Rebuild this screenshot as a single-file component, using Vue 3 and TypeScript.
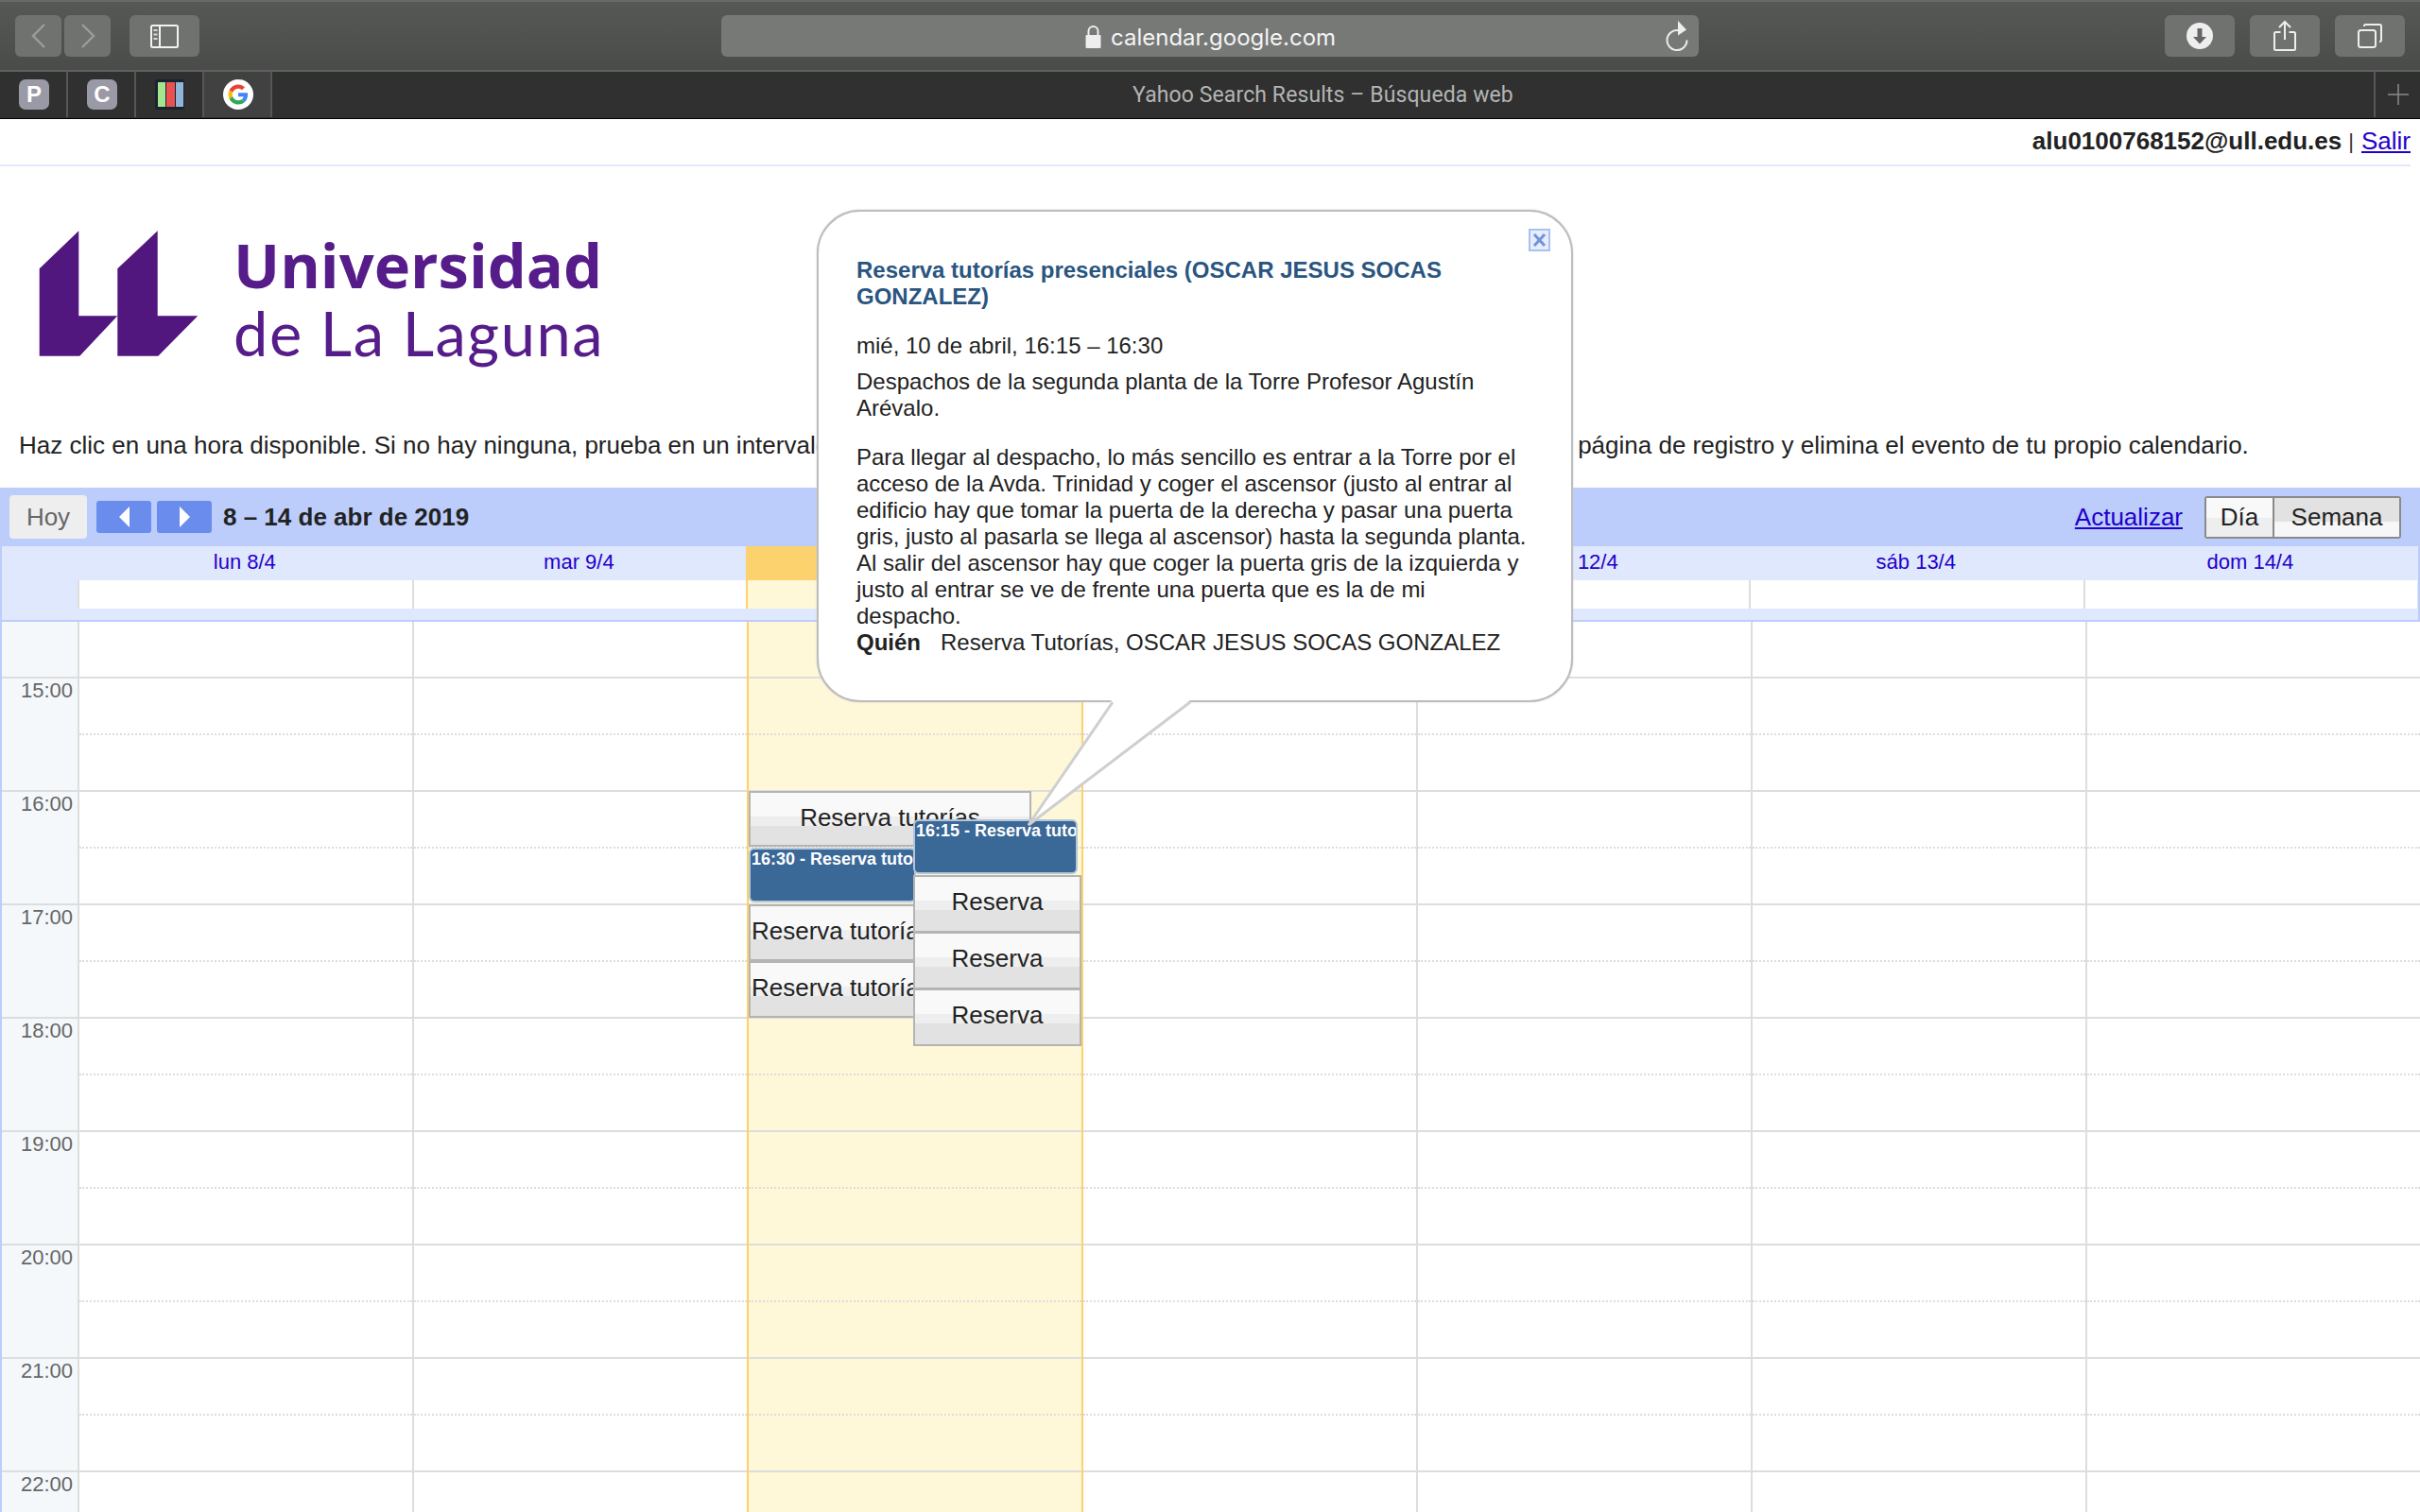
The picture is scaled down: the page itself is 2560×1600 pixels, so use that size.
<script setup lang="ts">
interface CalEvent {
  left: number
  top: number
  width: number
  height: number
  text: string
  kind: 'slot' | 'slot-center' | 'booked'
}

const days = ['lun 8/4', 'mar 9/4', 'mié 10/4', 'jue 11/4', 'vie 12/4', 'sáb 13/4', 'dom 14/4']
const hours = ['15:00', '16:00', '17:00', '18:00', '19:00', '20:00', '21:00', '22:00']
const TODAY = 2

// posiciones relativas a la columna del día
const events: CalEvent[] = [
  { left: 0, top: 179, width: 299, height: 59, text: 'Reserva tutorías', kind: 'slot-center' },
  { left: 0, top: 239, width: 177, height: 58, text: '16:30 - Reserva tutorías', kind: 'booked' },
  { left: 0, top: 299, width: 177, height: 60, text: 'Reserva tutorías', kind: 'slot' },
  { left: 0, top: 359, width: 177, height: 60, text: 'Reserva tutorías', kind: 'slot' },
  { left: 174, top: 209, width: 174, height: 58, text: '16:15 - Reserva tutorías', kind: 'booked' },
  { left: 174, top: 268, width: 178, height: 61, text: 'Reserva', kind: 'slot-center' },
  { left: 174, top: 328, width: 178, height: 61, text: 'Reserva', kind: 'slot-center' },
  { left: 174, top: 388, width: 178, height: 61, text: 'Reserva', kind: 'slot-center' },
]

function eventStyle(e: CalEvent) {
  return { left: e.left + 'px', top: e.top + 'px', width: e.width + 'px', height: e.height + 'px' }
}
</script>

<template>
  <div class="page">
    <header class="toolbar">
      <div class="nav-pair">
        <button class="tb-btn back">
          <svg width="18" height="26" viewBox="0 0 18 26"><path d="M15 1 3 13l12 12" fill="none" stroke="#9b9d9b" stroke-width="2.4" /></svg>
        </button>
        <button class="tb-btn back">
          <svg width="18" height="26" viewBox="0 0 18 26"><path d="M3 1l12 12L3 25" fill="none" stroke="#9b9d9b" stroke-width="2.4" /></svg>
        </button>
      </div>
      <button class="tb-btn wide sidebar-btn">
        <svg width="30" height="25" viewBox="0 0 30 25">
          <rect x="1" y="1" width="28" height="23" rx="1.5" fill="none" stroke="#f2f2f2" stroke-width="2" />
          <path d="M10 1v23" stroke="#f2f2f2" stroke-width="2" />
          <path d="M3.500 6h4M3.500 10.500h4M3.500 15h4" stroke="#d8d8d8" stroke-width="2" />
        </svg>
      </button>
      <div class="address">
        <svg class="lock" width="17" height="25" viewBox="0 0 17 25">
          <path d="M3.500 11V7a5 5 0 0 1 10 0v4" fill="none" stroke="#eee" stroke-width="2" />
          <rect x="0.500" y="11" width="16" height="14" rx="1" fill="#eee" />
        </svg>
        <span class="host">calendar.google.com</span>
        <svg class="reload" width="24" height="36" viewBox="0 0 24 36">
          <path d="M15 9.500a10.500 10.500 0 1 0 7.500 10" transform="translate(0 3)" fill="none" stroke="#eee" stroke-width="2" />
          <path d="M13 2l9 9.500-9 6z" fill="#eee" />
        </svg>
      </div>
      <div class="tb-right">
        <button class="tb-btn wide">
          <svg width="28" height="28" viewBox="0 0 28 28">
            <circle cx="14" cy="14" r="14" fill="#eee" />
            <path d="M11.500 6h5v9h4.500L14 22.500 7 15h4.500z" fill="#666" />
          </svg>
        </button>
        <button class="tb-btn wide">
          <svg width="24" height="34" viewBox="0 0 24 34">
            <path d="M7.500 13H2.500a1.500 1.500 0 0 0-1.500 1.500v16A1.500 1.500 0 0 0 2.500 32h19a1.500 1.500 0 0 0 1.500-1.500v-16a1.500 1.500 0 0 0-1.500-1.500h-5" fill="none" stroke="#eee" stroke-width="2" />
            <path d="M12 21V2M6 8l6-6 6 6" fill="none" stroke="#eee" stroke-width="2" />
          </svg>
        </button>
        <button class="tb-btn wide">
          <svg width="26" height="26" viewBox="0 0 26 26">
            <rect x="1" y="7" width="18" height="18" rx="2.500" fill="none" stroke="#eee" stroke-width="2" />
            <path d="M7 3V2.500A1.500 1.500 0 0 1 8.500 1h15A1.500 1.500 0 0 1 25 2.500v15a1.500 1.500 0 0 1-1.500 1.500H23" fill="none" stroke="#eee" stroke-width="2" />
          </svg>
        </button>
      </div>
    </header>

    <nav class="tabs">
      <div class="tab"><span class="fav-letter">P</span></div>
      <div class="tab"><span class="fav-letter">C</span></div>
      <div class="tab">
        <svg width="32" height="32" viewBox="0 0 32 32">
          <rect x="0" y="0" width="31" height="32" rx="3" fill="#1b2230" />
          <rect x="3" y="3" width="8" height="26" fill="#a2e58e" />
          <rect x="12" y="3" width="9" height="26" fill="#ea5050" />
          <rect x="22" y="3" width="8" height="26" fill="#8fb6d6" />
        </svg>
      </div>
      <div class="tab active">
        <svg width="32" height="32" viewBox="0 0 32 32">
          <circle cx="16" cy="16" r="16" fill="#fff" />
          <g transform="translate(5.500 5.500) scale(0.4375)">
            <path fill="#EA4335" d="M24 9.500c3.540 0 6.710 1.220 9.210 3.600l6.850-6.850C35.900 2.380 30.470 0 24 0 14.620 0 6.510 5.380 2.560 13.220l7.980 6.190C12.430 13.720 17.740 9.500 24 9.500z" />
            <path fill="#4285F4" d="M46.980 24.550c0-1.570-.15-3.090-.38-4.550H24v9.020h12.940c-.58 2.960-2.260 5.480-4.780 7.180l7.730 6c4.510-4.180 7.090-10.360 7.090-17.650z" />
            <path fill="#FBBC05" d="M10.530 28.590c-.48-1.450-.76-2.990-.76-4.590s.27-3.140.76-4.590l-7.980-6.190C.92 16.460 0 20.120 0 24c0 3.880.92 7.540 2.560 10.780l7.970-6.190z" />
            <path fill="#34A853" d="M24 48c6.480 0 11.930-2.130 15.890-5.810l-7.730-6c-2.150 1.450-4.920 2.300-8.160 2.300-6.260 0-11.570-4.220-13.470-9.910l-7.980 6.190C6.510 42.620 14.620 48 24 48z" />
          </g>
        </svg>
      </div>
      <div class="tab-title">Yahoo Search Results – Búsqueda web</div>
      <div class="new-tab">
        <svg width="22" height="22" viewBox="0 0 22 22"><path d="M11 0v22M0 11h22" stroke="#8a8a8a" stroke-width="1.500" /></svg>
      </div>
    </nav>

    <div class="account">
      <b>alu0100768152@ull.edu.es</b><span class="sep">|</span><a class="link">Salir</a>
    </div>

    <div class="brand">
      <svg class="brand-mark" width="170" height="134" viewBox="0 0 170 134">
        <path d="M.7 40.300 42.300.3v90h41l-40 42.400H.7z" fill="#52167f" />
        <path d="M83.300 40.300 125.700.3v90h42.600l-42 42.400h-43z" fill="#52167f" />
      </svg>
      <div class="brand-name">
        <div class="brand-top">Universidad</div>
        <div class="brand-bottom">de La Laguna</div>
      </div>
    </div>

    <p class="intro">Haz clic en una hora disponible. Si no hay ninguna, prueba en un intervalo de fechas diferentes.&nbsp; Para cancelar una reserva hecha, vuelve a la página de registro y elimina el evento de tu propio calendario.</p>

    <div class="cal-bar">
      <button class="today-btn">Hoy</button>
      <button class="arrow-btn"><span class="tri left"></span></button>
      <button class="arrow-btn"><span class="tri right"></span></button>
      <span class="range">8 – 14 de abr de 2019</span>
      <a class="link refresh">Actualizar</a>
      <div class="view-switch">
        <button class="view day-view">Día</button>
        <button class="view week-view">Semana</button>
      </div>
    </div>

    <div class="week-head">
      <div class="head-row labels">
        <div></div>
        <div v-for="(d, i) in days" :key="d" :class="['label', { today: i === TODAY }]">{{ d }}</div>
      </div>
      <div class="head-row allday">
        <div></div>
        <div v-for="(d, i) in days" :key="d" :class="['allday-cell', { today: i === TODAY }]"></div>
      </div>
    </div>

    <div class="grid">
      <div class="gutter">
        <div class="first-slot"></div>
        <div v-for="h in hours" :key="h" class="gutter-hour">{{ h }}</div>
      </div>
      <div
        v-for="(d, i) in days"
        :key="d"
        :class="['day', { today: i === TODAY, 'after-today': i === TODAY + 1 }]"
      >
        <div class="first-slot"></div>
        <div v-for="h in hours" :key="h" class="hour"><div class="half"></div></div>
        <div v-if="i === TODAY" class="events">
          <div
            v-for="e in events"
            :key="e.left + '-' + e.top"
            :class="['event', e.kind]"
            :style="eventStyle(e)"
          >{{ e.text }}</div>
        </div>
      </div>
    </div>

    <!-- burbuja con el detalle de la cita -->
    <div class="bubble">
      <span class="close">
        <svg width="23" height="24" viewBox="0 0 23 24">
          <rect x="1" y="1" width="21" height="22" fill="#e6edfb" stroke="#a9c1f2" stroke-width="2" />
          <path d="M6 6l11 12M17 6 6 18" stroke="#6f93dc" stroke-width="3" />
        </svg>
      </span>
      <h3 class="bubble-title">Reserva tutorías presenciales (OSCAR JESUS SOCAS GONZALEZ)</h3>
      <p class="when">mié, 10 de abril, 16:15 – 16:30</p>
      <p class="where">Despachos de la segunda planta de la Torre Profesor Agustín Arévalo.</p>
      <p class="desc">Para llegar al despacho, lo más sencillo es entrar a la Torre por el acceso de la Avda. Trinidad y coger el ascensor (justo al entrar al edificio hay que tomar la puerta de la derecha y pasar una puerta gris, justo al pasarla se llega al ascensor) hasta la segunda planta. Al salir del ascensor hay que coger la puerta gris de la izquierda y justo al entrar se ve de frente una puerta que es la de mi despacho.</p>
      <p class="who"><b>Quién</b><span>Reserva Tutorías, OSCAR JESUS SOCAS GONZALEZ</span></p>
    </div>
    <svg class="tail" width="190" height="140" viewBox="0 0 190 140">
      <path d="M96 1 8 133 179 1z" fill="#fff" />
      <path d="M97 3 8 133 179 3" fill="none" stroke="#cfcfcf" stroke-width="3" />
    </svg>
  </div>
</template>

<style scoped>
.page {
  position: relative;
  width: 2560px;
  height: 1600px;
  overflow: hidden;
  background: #fff;
  color: #222;
  font-family: "Liberation Sans", Arial, sans-serif;
  font-size: 26px;
}
button {
  font-family: inherit;
  padding: 0;
  border: 0;
}
.toolbar {
  box-sizing: border-box;
  display: flex;
  align-items: flex-start;
  height: 76px;
  padding: 14px 16px 0;
  background: linear-gradient(#565856, #4a4c4a);
  border-top: 2px solid #686a68;
  border-bottom: 2px solid #5f615f;
}
.nav-pair {
  display: flex;
  gap: 3px;
}
.tb-btn {
  display: flex;
  align-items: center;
  justify-content: center;
  width: 49px;
  height: 44px;
  border-radius: 6px;
  background: #707270;
}
.wide {
  width: 74px;
}
.sidebar-btn {
  margin-left: 20px;
}
.address {
  display: flex;
  align-items: center;
  width: 1034px;
  height: 44px;
  margin-left: 552px;
  border-radius: 6px;
  background: #777977;
  color: #f4f4f4;
}
.lock {
  margin-left: 385px;
  flex-shrink: 0;
}
.host {
  margin-left: 10px;
  padding-top: 2px;
  font-family: Inter, "Liberation Sans", sans-serif;
  font-size: 24px;
}
.reload {
  margin-left: auto;
  margin-right: 11px;
}
.tb-right {
  display: flex;
  gap: 16px;
  margin-left: auto;
}
.tabs {
  position: relative;
  display: flex;
  height: 49px;
  background: #2f302f;
  border-bottom: 1px solid #000;
  box-sizing: content-box;
}
.tab {
  display: flex;
  align-items: center;
  justify-content: center;
  box-sizing: border-box;
  width: 72px;
  height: 48px;
  padding-left: 2px;
  border-right: 2px solid #565756;
}
.tab.active {
  background: #404140;
}
.fav-letter {
  display: flex;
  align-items: center;
  justify-content: center;
  width: 32px;
  height: 32px;
  border-radius: 7px;
  background: #9a9aa6;
  color: #fff;
  font-size: 24px;
  font-weight: 700;
}
.tab-title {
  flex: 1;
  padding-top: 1px;
  text-align: center;
  line-height: 48px;
  color: #b4b4b4;
  font-family: Roboto, "Liberation Sans", sans-serif;
  font-size: 23px;
  letter-spacing: 0.1px;
}
.new-tab {
  display: flex;
  align-items: center;
  justify-content: center;
  box-sizing: border-box;
  width: 49px;
  height: 48px;
  border-left: 2px solid #565756;
}
.account {
  box-sizing: border-box;
  height: 50px;
  margin-right: 10px;
  padding-top: 8px;
  text-align: right;
  line-height: 30px;
  border-bottom: 2px solid #e0e8fd;
}
.sep {
  margin: 0 8px 0 7px;
  font-size: 22px;
  color: #333;
  vertical-align: 1px;
}
.link {
  color: #2200cc;
  text-decoration: underline;
}
.brand {
  display: flex;
  height: 144px;
  margin-top: 68px;
  padding-left: 41px;
  gap: 36px;
}
.brand-name {
  font-size: 65px;
  line-height: 72px;
  color: #551c8a;
}
.brand-top {
  font-family: "Open Sans", Lato, sans-serif;
  font-weight: 700;
}
.brand-bottom {
  font-family: Lato, "Open Sans", sans-serif;
  font-weight: 400;
  letter-spacing: 1.5px;
}
.intro {
  margin: 68px 0 0;
  padding-left: 20px;
  line-height: 30px;
  white-space: nowrap;
  color: #222;
}
.cal-bar {
  display: flex;
  align-items: center;
  height: 62px;
  margin-top: 30px;
  padding: 0 20px 0 10px;
  background: #bccdfc;
}
.today-btn {
  width: 82px;
  height: 46px;
  border-radius: 4px;
  background: #eeeeee;
  color: #666;
  font-size: 26px;
}
.arrow-btn {
  display: flex;
  align-items: center;
  justify-content: center;
  width: 58px;
  height: 34px;
  margin-left: 6px;
  border-radius: 3px;
  background: #6a8cec;
}
.today-btn + .arrow-btn {
  margin-left: 10px;
}
.tri {
  width: 0;
  height: 0;
  border-top: 11px solid transparent;
  border-bottom: 11px solid transparent;
}
.tri.left {
  border-right: 11px solid #fff;
}
.tri.right {
  border-left: 11px solid #fff;
}
.range {
  margin-left: 12px;
  font-size: 26px;
  font-weight: 700;
}
.refresh {
  margin-left: auto;
  margin-right: 23px;
}
.view-switch {
  display: flex;
  box-sizing: border-box;
  height: 45px;
  border: 2px solid #8a8a8a;
  border-radius: 3px;
}
.view {
  font-size: 26px;
  color: #222;
}
.day-view {
  width: 72px;
  border-right: 2px solid #8a8a8a;
  background: linear-gradient(#f9f9f9 0 50%, #eeeeee 50%);
}
.week-view {
  width: 132px;
  background: linear-gradient(#e2e2e2 0 60%, #f7f7f7 60%);
}
.week-head {
  box-sizing: border-box;
  height: 80px;
  background: #e0e8fd;
  border-left: 2px solid #bccdfc;
  border-right: 2px solid #bccdfc;
  border-bottom: 2px solid #bccdfc;
}
.head-row {
  display: grid;
  grid-template-columns: 80px repeat(7, 353.6px);
}
.labels {
  height: 36px;
}
.label {
  text-align: center;
  font-size: 22px;
  line-height: 34px;
  color: #2200cc;
}
.label.today {
  background: #fbd26e;
}
.allday {
  height: 30px;
}
.allday-cell {
  box-sizing: border-box;
  background: #fff;
  border-left: 2px solid #ddd;
}
.allday-cell.today {
  background: #fef7d8;
  border-left-color: #fbd26e;
}
.grid {
  display: grid;
  grid-template-columns: 82px repeat(7, 354px);
  height: 942px;
  overflow: hidden;
}
.gutter {
  background: #f4f8fb;
  border-left: 2px solid #bccdfc;
}
.first-slot {
  height: 58px;
}
.gutter-hour {
  box-sizing: border-box;
  height: 120px;
  padding-right: 5px;
  border-top: 2px solid #ddd;
  text-align: right;
  font-size: 22px;
  line-height: 26px;
  color: #666;
}
.day {
  position: relative;
  box-sizing: border-box;
  border-left: 2px solid #ddd;
}
.day.today {
  background: #fef7d8;
  border-left-color: #fbd26e;
}
.day.after-today {
  border-left-color: #fbd26e;
}
.hour {
  box-sizing: border-box;
  height: 120px;
  padding-top: 58px;
  border-top: 2px solid #ddd;
}
.half {
  border-top: 2px dotted #ddd;
}
.events {
  position: absolute;
  inset: 0;
}
.event {
  position: absolute;
  box-sizing: border-box;
  overflow: hidden;
  white-space: nowrap;
}
.slot,
.slot-center {
  border: 2px solid #b4b4b4;
  background: linear-gradient(#f9f9f9 0 25px, #eeeeee 25px 35px, #e2e2e2 35px);
  line-height: 52px;
  font-size: 26px;
  color: #222;
}
.slot {
  padding-left: 1px;
}
.slot-center {
  text-align: center;
}
.booked {
  border: 2px solid #b4c6da;
  border-radius: 6px;
  background: #3a6897;
  color: #fff;
  font-size: 18px;
  font-weight: 700;
  line-height: 20px;
  padding-left: 1px;
}
.bubble {
  position: absolute;
  left: 864px;
  top: 222px;
  box-sizing: border-box;
  width: 800px;
  height: 521px;
  padding: 48px 40px 0;
  background: #fff;
  border: 2px solid #bdbdbd;
  border-radius: 46px;
  box-shadow: 0 0 2px #ccc;
  font-size: 24px;
  line-height: 28px;
  color: #222;
}
.close {
  position: absolute;
  left: 751px;
  top: 18px;
  line-height: 0;
}
.bubble-title {
  margin: 0;
  width: 640px;
  font-size: 24px;
  line-height: 28px;
  font-weight: 700;
  color: #2a5580;
}
.bubble p {
  margin: 0;
}
.bubble .when {
  margin-top: 24px;
}
.bubble .where {
  margin-top: 10px;
}
.bubble .desc {
  margin-top: 24px;
}
.who span {
  margin-left: 21px;
}
.tail {
  position: absolute;
  left: 1080px;
  top: 740px;
}
</style>

<style>
html,
body {
  margin: 0;
  overflow: hidden;
}
</style>
